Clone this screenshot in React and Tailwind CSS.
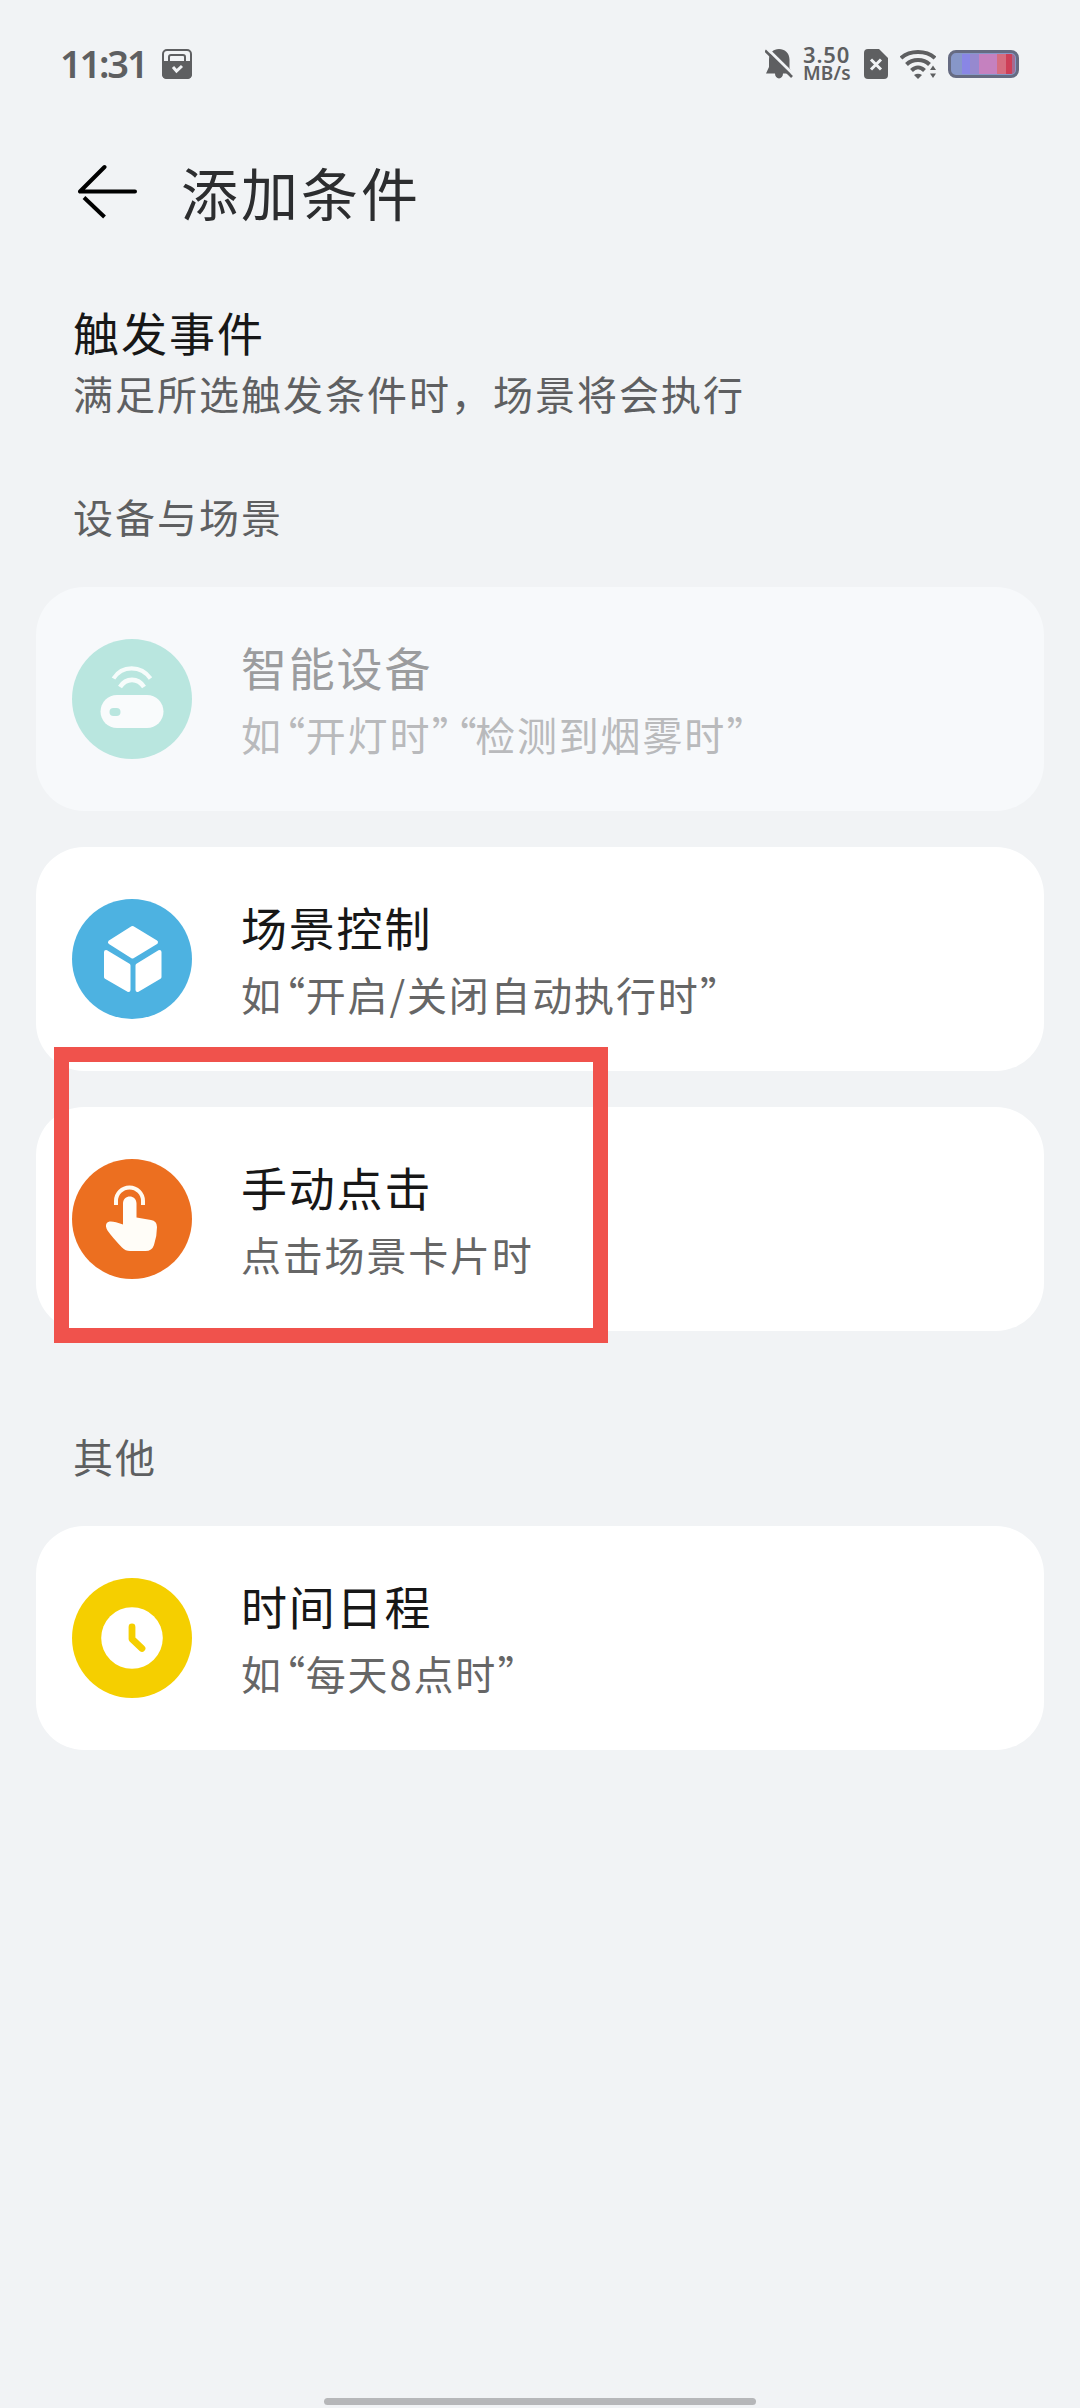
function DeviceIcon() {
  return (
    <svg viewBox="0 0 120 120" className="h-full w-full" fill="none">
      <path d="M41.500 39.500C50 26 69 26 78.500 39.500" stroke="#f6fcfb" strokeWidth="4.200" />
      <path d="M48 48C54 38.500 66 38.500 72 48" stroke="#f6fcfb" strokeWidth="4.600" />
      <rect x="28.500" y="56" width="63" height="33" rx="16.500" fill="#f9fbfc" />
      <rect x="37.500" y="69" width="11" height="8" rx="4" fill="#b9e6df" />
    </svg>
  )
}

function CubeIcon() {
  return (
    <svg viewBox="0 0 120 120" className="h-full w-full" fill="#fff" stroke="#fff" strokeWidth="4" strokeLinejoin="round">
      <path d="M60.500 29L84 43.200L60.500 57.500L38 43.200Z" />
      <path d="M34 53L56.500 66.500V91L34 78Z" />
      <path d="M87.500 53L65.500 66.500V91L87.500 78Z" />
    </svg>
  )
}

function TapIcon() {
  return (
    <svg viewBox="0 0 120 120" className="h-full w-full">
      <path d="M44 46V42A13.500 13.500 0 0 1 71 42V46" fill="none" stroke="#fffaf0" strokeWidth="4" />
      <path
        d="M51 44.500C51 35 64.500 35 64.500 44.500V58.500L79 61Q85 62 85 68Q85 77 82 86Q80 92 73.500 92H58Q53.500 92 50 88.500Q40 78 35.500 71.500Q33 67 34.500 64.500C37 61 42 62.500 51 65.500Z"
        fill="#fffdf8"
      />
    </svg>
  )
}

function ClockIcon() {
  return (
    <svg viewBox="0 0 120 120" className="h-full w-full" fill="none">
      <circle cx="60" cy="60" r="30.800" fill="#fff" />
      <path d="M60 49V61L70 70.500" stroke="#f5cf00" strokeWidth="6.800" strokeLinecap="round" strokeLinejoin="round" />
    </svg>
  )
}

function StatusBar() {
  return (
    <div className="flex h-32 items-center justify-between pr-[61px] pl-[60px]">
      <div className="flex items-center">
        <span className="w-[102px] pb-[2px] font-['Noto_Sans',sans-serif] text-[38px] leading-none font-semibold tracking-[-2.2px]">11:31</span>
        <svg viewBox="0 0 30 30" className="h-[30px] w-[30px]">
          <rect x="1" y="1" width="28" height="28" rx="4" fill="none" stroke="currentColor" strokeWidth="2" />
          <path d="M0 12H30V25Q30 30 25 30H5Q0 30 0 25Z" fill="currentColor" />
          <path d="M7 13V8Q7 6 9 6H21Q23 6 23 8V13" fill="none" stroke="currentColor" strokeWidth="2" />
          <path d="M11 18L14.500 22L20 17" fill="none" stroke="#f1f3f5" strokeWidth="3" />
        </svg>
      </div>
      <div className="flex items-center">
        <svg viewBox="0 0 28 30" className="mr-[10px] h-[30px] w-7">
          <path d="M14 0C19.500 0 24.500 4 24.500 10.500V19L27 24.500H18A4 5 0 0 1 10 24.500H1L4 18V10.500C4 4 8.500 0 14 0Z" fill="currentColor" />
          <path d="M2 -0.500L29 26" stroke="#f1f3f5" strokeWidth="3" />
          <path d="M0 1.500L27 28" stroke="currentColor" strokeWidth="2.600" />
        </svg>
        <div className="flex w-[61px] flex-col pb-px font-['Noto_Sans',sans-serif] font-semibold">
          <span className="text-[22px] leading-[19px] tracking-[0.8px]">3.50</span>
          <span className="text-[19px] leading-[18px] tracking-[0.2px]">MB/s</span>
        </div>
        <svg viewBox="0 0 24 30" className="mr-3 h-[30px] w-6">
          <path d="M4 0H15L24 9V26Q24 30 20 30H4Q0 30 0 26V4Q0 0 4 0Z" fill="currentColor" />
          <path d="M7 10.500L17 20.500M17 10.500L7 20.500" stroke="#f1f3f5" strokeWidth="3" />
        </svg>
        <svg viewBox="0 0 36 30" className="mr-3 h-[30px] w-9" fill="none" stroke="currentColor" strokeWidth="4">
          <path d="M1 9C10 1 26 1 35 9" />
          <path d="M6.500 15.500C12.500 9.500 23.500 9.500 29.500 15.500" />
          <path d="M11.500 21.500C15.500 17.500 20.500 17.500 24.500 21.500" />
          <path d="M14 26Q18 23.500 22 26L18 30Z" fill="currentColor" stroke="none" />
          <path d="M33 16.500L36 21H30ZM33 29L36 24.500H30Z" fill="currentColor" stroke="none" />
        </svg>
        <div className="h-[28px] w-[71px] rounded-[8px] border-[3px] border-[#666b82] bg-[#8797c8] p-px">
          <div className="flex h-full overflow-hidden rounded-[4px]">
            <div className="w-[10px] bg-[#8797c8]" />
            <div className="w-[8px] bg-[#8986e5]" />
            <div className="w-[9px] bg-[#9689cf]" />
            <div className="w-[18px] bg-[#c581bf]" />
            <div className="w-[9px] bg-[#d66d80]" />
            <div className="w-[6px] bg-[#ce3f57]" />
            <div className="w-[3px] bg-[#a66b91]" />
          </div>
        </div>
      </div>
    </div>
  )
}

// Quote marks are narrower than the full-width glyphs around them
const Open = ({ first }) => (
  <span className={first ? "inline-block w-[23px] pl-[2px] [font-feature-settings:'palt']" : "inline-block w-[19px] [font-feature-settings:'palt']"}>“</span>
)
const Close = () => <span className="inline-block w-[25px] pl-px [font-feature-settings:'palt']">”</span>

function ConditionCard({ icon, color, title, children, disabled = false }) {
  return (
    <div className={`flex h-56 items-center rounded-[48px] pl-9 ${disabled ? "bg-[#f7f9fb]" : "bg-white"}`}>
      <div className={`h-[120px] w-[120px] shrink-0 rounded-full ${color}`}>{icon}</div>
      <div className="ml-[49px] pt-px whitespace-nowrap">
        <h3 className={`text-[46px] leading-[68px] tracking-[1.800px] ${disabled ? "text-[#9b9c9e]" : "text-[#171717]"}`}>{title}</h3>
        <p className={`text-[40px] leading-[68px] tracking-[1.800px] ${disabled ? "text-[#b9babc]" : "text-[#666666]"}`}>{children}</p>
      </div>
    </div>
  )
}

export default function App() {
  return (
    <div className="flex h-[2408px] w-[1080px] flex-col bg-[#f1f3f5] font-['Noto_Sans_CJK_SC',sans-serif] text-[#5e5f61]">
      <StatusBar />

      <header className="flex h-32 items-center pl-[78px]">
        <svg viewBox="0 0 60 56" className="h-14 w-[60px]" fill="none" stroke="#000" strokeWidth="4" strokeLinecap="round" strokeLinejoin="round">
          <path d="M26.500 3L2 27.500H57" />
          <path d="M6 33.500L26.500 53" strokeLinecap="butt" />
        </svg>
        <h1 className="ml-[43px] pb-[2px] text-[57px] leading-none tracking-[3px] text-[#2c2d2f]">添加条件</h1>
      </header>

      <section className="mt-[41px] pl-[73px]">
        <h2 className="text-[46px] leading-[68px] tracking-[2px] text-[#171717]">触发事件</h2>
        <p className="text-[40px] leading-[56px] tracking-[2px]">满足所选触发条件时，场景将会执行</p>
      </section>

      <h4 className="mt-[67px] pl-[73px] text-[40px] leading-[56px] tracking-[2px]">设备与场景</h4>

      <div className="relative mx-9 mt-[43px] flex flex-col gap-9">
        <ConditionCard icon={<DeviceIcon />} color="bg-[#b9e6df]" title="智能设备" disabled>
          如<Open first />开灯时<Close /><Open />检测到烟雾时<Close />
        </ConditionCard>
        <ConditionCard icon={<CubeIcon />} color="bg-[#4db2e1]" title="场景控制">
          如<Open first />开启/关闭自动执行时<Close />
        </ConditionCard>
        <ConditionCard icon={<TapIcon />} color="bg-[#ec6f20]" title="手动点击">
          点击场景卡片时
        </ConditionCard>
        <div className="absolute top-[460px] left-[18px] h-[296px] w-[554px] border-[15px] border-[#f0524c]" />
      </div>

      <h4 className="mt-[97px] pl-[73px] text-[40px] leading-[56px] tracking-[2px]">其他</h4>

      <div className="mx-9 mt-[42px]">
        <ConditionCard icon={<ClockIcon />} color="bg-[#f5cf00]" title="时间日程">
          如<Open first />每天8点时<Close />
        </ConditionCard>
      </div>

      <div className="mx-auto mt-auto mb-[3px] h-[7px] w-[432px] rounded-full bg-[#b6b7b9]" />
    </div>
  )
}
